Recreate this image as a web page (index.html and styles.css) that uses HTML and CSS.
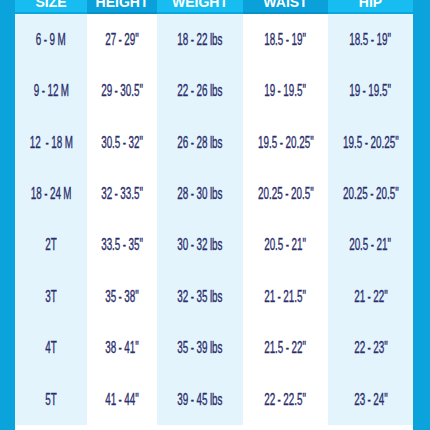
FILE: index.html
```html
<!DOCTYPE html>
<html>
<head>
<meta charset="utf-8">
<link rel="stylesheet" href="styles.css">
</head>
<body>
<div class="frame">
  <div class="chart">
    <div class="hd light"><span>SIZE</span></div>
    <div class="hd dark"><span>HEIGHT</span></div>
    <div class="hd light"><span>WEIGHT</span></div>
    <div class="hd dark"><span>WAIST</span></div>
    <div class="hd light"><span>HIP</span></div>

    <div class="c tint"><span>6 - 9 M</span></div><div class="c"><span>27 - 29&quot;</span></div><div class="c tint"><span>18 - 22 lbs</span></div><div class="c"><span>18.5 - 19&quot;</span></div><div class="c tint"><span>18.5 - 19&quot;</span></div>
    <div class="c tint"><span>9 - 12 M</span></div><div class="c"><span>29 - 30.5&quot;</span></div><div class="c tint"><span>22 - 26 lbs</span></div><div class="c"><span>19 - 19.5&quot;</span></div><div class="c tint"><span>19 - 19.5&quot;</span></div>
    <div class="c tint"><span>12 &nbsp;- 18 M</span></div><div class="c"><span>30.5 - 32&quot;</span></div><div class="c tint"><span>26 - 28 lbs</span></div><div class="c"><span>19.5 - 20.25&quot;</span></div><div class="c tint"><span>19.5 - 20.25&quot;</span></div>
    <div class="c tint"><span>18 - 24 M</span></div><div class="c"><span>32 - 33.5&quot;</span></div><div class="c tint"><span>28 - 30 lbs</span></div><div class="c"><span>20.25 - 20.5&quot;</span></div><div class="c tint"><span>20.25 - 20.5&quot;</span></div>
    <div class="c tint"><span>2T</span></div><div class="c"><span>33.5 - 35&quot;</span></div><div class="c tint"><span>30 - 32 lbs</span></div><div class="c"><span>20.5 - 21&quot;</span></div><div class="c tint"><span>20.5 - 21&quot;</span></div>
    <div class="c tint"><span>3T</span></div><div class="c"><span>35 - 38&quot;</span></div><div class="c tint"><span>32 - 35 lbs</span></div><div class="c"><span>21 - 21.5&quot;</span></div><div class="c tint"><span>21 - 22&quot;</span></div>
    <div class="c tint"><span>4T</span></div><div class="c"><span>38 - 41&quot;</span></div><div class="c tint"><span>35 - 39 lbs</span></div><div class="c"><span>21.5 - 22&quot;</span></div><div class="c tint"><span>22 - 23&quot;</span></div>
    <div class="c tint"><span>5T</span></div><div class="c"><span>41 - 44&quot;</span></div><div class="c tint"><span>39 - 45 lbs</span></div><div class="c"><span>22 - 22.5&quot;</span></div><div class="c tint"><span>23 - 24&quot;</span></div>
  </div>
</div>
</body>
</html>
```
FILE: styles.css
```css
html, body {
  margin: 0;
  padding: 0;
  background: #0aa3dc;
}
.frame {
  width: 430px;
  height: 430px;
  overflow: hidden;
  box-sizing: border-box;
  border-left: 15px solid #0aa3dc;
  border-right: 17px solid #0aa3dc;
  background: #ffffff;
}
.chart {
  display: grid;
  grid-template-columns: 72px 70px 86px 85px 85px;
  grid-template-rows: 14px;
  grid-auto-rows: 51.43px;
}
.hd {
  height: 12px;
  border-bottom: 2px solid #0993cc;
  overflow: hidden;
  text-align: center;
  color: #ffffff;
  font-family: "Liberation Sans", Arial, sans-serif;
  font-weight: bold;
  font-size: 14px;
  line-height: 5px;
}
.hd.light { background: #17bdf0; border-bottom-color: #0aa6df; }
.hd.dark { background: #0aa0da; border-bottom-color: #0890c9; }
.c {
  display: flex;
  align-items: center;
  justify-content: center;
  background: #ffffff;
  color: #2b2e6c;
  font-family: "Liberation Sans", Arial, sans-serif;
  font-size: 17px;
  white-space: nowrap;
}
.c.tint { background: #e3f4fc; }
.c span {
  display: inline-block;
  word-spacing: -0.5px;
  -webkit-text-stroke: 0.35px #2b2e6c;
  transform: scaleX(0.58);
}
```
